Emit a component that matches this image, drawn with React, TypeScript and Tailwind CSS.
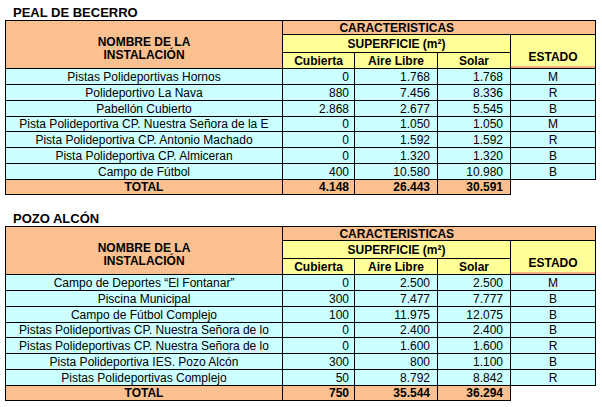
import React from 'react'

type Row = {
  name: string
  cubierta: string
  aire: string
  solar: string
  estado: string
}

type Site = {
  title: string
  rows: Row[]
  total: [string, string, string]
}

const sites: Site[] = [
  {
    title: 'PEAL DE BECERRO',
    rows: [
      { name: 'Pistas Polideportivas Hornos', cubierta: '0', aire: '1.768', solar: '1.768', estado: 'M' },
      { name: 'Polideportivo La Nava', cubierta: '880', aire: '7.456', solar: '8.336', estado: 'R' },
      { name: 'Pabellón Cubierto', cubierta: '2.868', aire: '2.677', solar: '5.545', estado: 'B' },
      { name: 'Pista Polideportiva CP. Nuestra Señora de la E', cubierta: '0', aire: '1.050', solar: '1.050', estado: 'M' },
      { name: 'Pista Polideportiva CP. Antonio Machado', cubierta: '0', aire: '1.592', solar: '1.592', estado: 'R' },
      { name: 'Pista Polideportiva CP. Almiceran', cubierta: '0', aire: '1.320', solar: '1.320', estado: 'B' },
      { name: 'Campo de Fútbol', cubierta: '400', aire: '10.580', solar: '10.980', estado: 'B' },
    ],
    total: ['4.148', '26.443', '30.591'],
  },
  {
    title: 'POZO ALCÓN',
    rows: [
      { name: 'Campo de Deportes “El Fontanar”', cubierta: '0', aire: '2.500', solar: '2.500', estado: 'M' },
      { name: 'Piscina Municipal', cubierta: '300', aire: '7.477', solar: '7.777', estado: 'B' },
      { name: 'Campo de Fútbol Complejo', cubierta: '100', aire: '11.975', solar: '12.075', estado: 'B' },
      { name: 'Pistas Polideportivas CP. Nuestra Señora de lo', cubierta: '0', aire: '2.400', solar: '2.400', estado: 'B' },
      { name: 'Pistas Polideportivas CP. Nuestra Señora de lo', cubierta: '0', aire: '1.600', solar: '1.600', estado: 'R' },
      { name: 'Pista Polideportiva IES. Pozo Alcón', cubierta: '300', aire: '800', solar: '1.100', estado: 'B' },
      { name: 'Pistas Polideportivas Complejo', cubierta: '50', aire: '8.792', solar: '8.842', estado: 'R' },
    ],
    total: ['750', '35.544', '36.294'],
  },
]

// row heights repeat 16,16,16,15 so that 8 rows fill 126px
const rowHeights = ['h-[16px]', 'h-[16px]', 'h-[16px]', 'h-[15px]']

function SiteTable({ site }: { site: Site }) {
  return (
    <table className="ml-[5px] w-[590px] table-fixed border-collapse text-[12px] leading-[13px] text-black">
      <colgroup>
        <col className="w-[277px]" />
        <col className="w-[72px]" />
        <col className="w-[83px]" />
        <col className="w-[73px]" />
        <col className="w-[85px]" />
      </colgroup>
      <thead>
        <tr className="h-[14px]">
          <td
            rowSpan={3}
            className="border border-black bg-[#FAC090] pt-[15px] align-top text-center font-bold leading-[13px]"
          >
            NOMBRE DE LA
            <br />
            INSTALACIÓN
          </td>
          <td
            colSpan={3}
            className="border-y border-l border-black bg-[#FAC090] p-0 text-center align-bottom font-bold leading-[12px]"
          >
            CARACTERISTICAS
          </td>
          <td className="border-y border-r border-black bg-[#FAC090] p-0 leading-[12px]" />
        </tr>
        <tr className="h-[18px]">
          <td colSpan={3} className="border border-black bg-[#FFFF99] p-0 pb-[1px] text-center align-bottom font-bold">
            SUPERFICIE (m²)
          </td>
          <td
            rowSpan={2}
            className="border border-black bg-[#FFFF99] p-0 pb-[4px] text-center align-bottom font-bold shadow-[inset_0_-2px_0_#F4B183]"
          >
            ESTADO
          </td>
        </tr>
        <tr className="h-[16px]">
          <td className="border border-black bg-[#FFFF99] p-0 text-center align-bottom font-bold">Cubierta</td>
          <td className="border border-black bg-[#FFFF99] p-0 text-center align-bottom font-bold">Aire Libre</td>
          <td className="border border-black bg-[#FFFF99] p-0 text-center align-bottom font-bold">Solar</td>
        </tr>
      </thead>
      <tbody>
        {site.rows.map((row, i) => (
          <tr key={i} className={rowHeights[i % 4]}>
            <td className="overflow-hidden whitespace-nowrap border border-black bg-[#CCFFFF] p-0 pt-[1px] text-center">
              {row.name}
            </td>
            <td className="border border-black bg-[#CCFFFF] p-0 pr-[5px] pt-[1px] text-right">{row.cubierta}</td>
            <td className="border border-black bg-[#CCFFFF] p-0 pr-[7px] pt-[1px] text-right">{row.aire}</td>
            <td className="border border-black bg-[#CCFFFF] p-0 pr-[7px] pt-[1px] text-right">{row.solar}</td>
            <td className="border border-black bg-[#CCFFFF] p-0 pt-[1px] text-center">{row.estado}</td>
          </tr>
        ))}
        <tr className="h-[15px]">
          <td className="border border-black bg-[#FAC090] p-0 pt-[1px] text-center font-bold">TOTAL</td>
          <td className="border border-black bg-[#FAC090] p-0 pr-[5px] pt-[1px] text-right font-bold">{site.total[0]}</td>
          <td className="border border-black bg-[#FAC090] p-0 pr-[7px] pt-[1px] text-right font-bold">{site.total[1]}</td>
          <td className="border border-black bg-[#FAC090] p-0 pr-[7px] pt-[1px] text-right font-bold">{site.total[2]}</td>
          <td className="p-0" />
        </tr>
      </tbody>
    </table>
  )
}

export default function App() {
  return (
    <div
      className="h-[407px] w-[602px] bg-white"
      style={{ fontFamily: '"Liberation Sans", Arial, sans-serif' }}
    >
      <div className="flex h-[20px] items-end pb-[1px] pl-[13px] text-[13px] font-bold leading-none">
        {sites[0].title}
      </div>
      <SiteTable site={sites[0]} />
      <div className="flex h-[31px] items-end pb-[1px] pl-[13px] text-[13px] font-bold leading-none">
        {sites[1].title}
      </div>
      <SiteTable site={sites[1]} />
    </div>
  )
}
